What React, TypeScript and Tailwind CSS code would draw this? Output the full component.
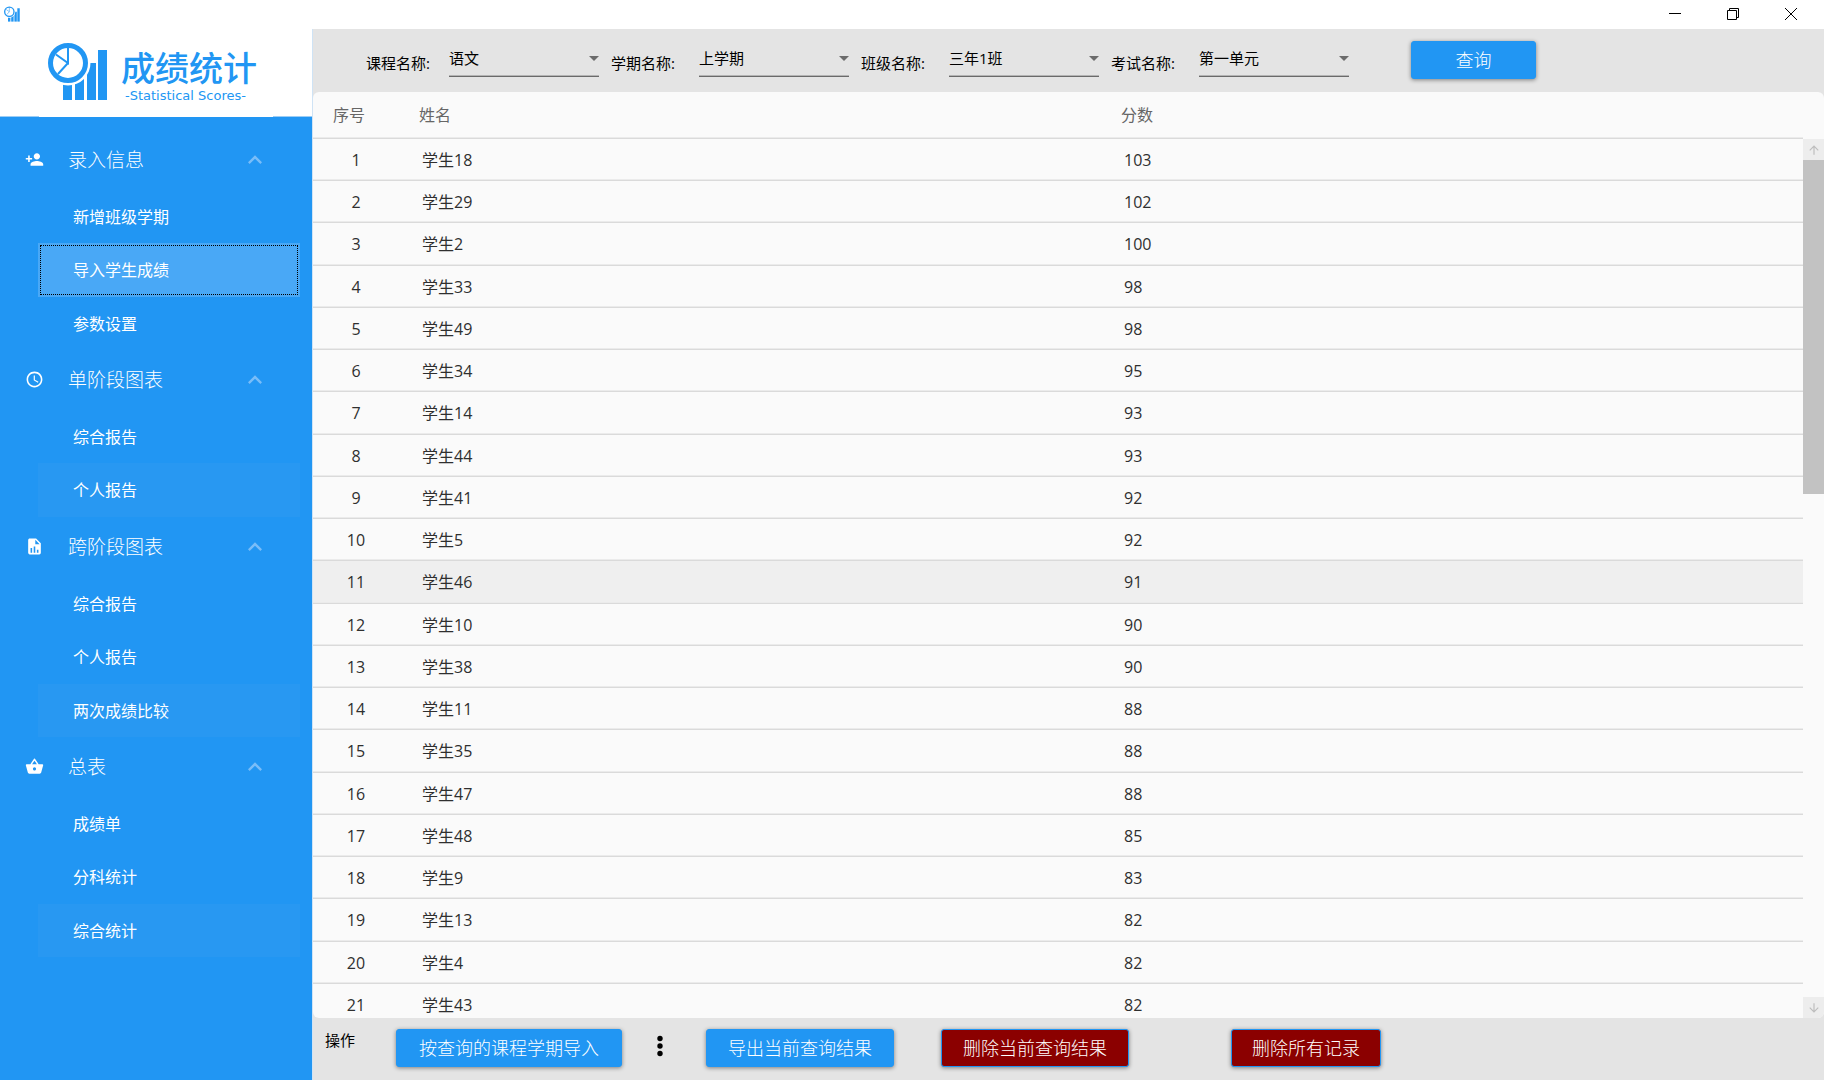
import type { ReactNode } from "react";
import {
  MdAccessTime,
  MdArrowDownward,
  MdArrowUpward,
  MdExpandLess,
  MdPersonAdd,
  MdShoppingBasket,
} from "react-icons/md";
import clsx from "clsx";

type Item = { name: string; state?: "active" | "hover" };
type Group = { title: string; icon: ReactNode; items: Item[] };

const FileChart = () => (
  <svg width={19} height={19} viewBox="0 0 24 24" fill="currentColor">
    <path d="M13 9H18.5L13 3.5V9M6 2H14L20 8V20A2 2 0 0 1 18 22H6C4.89 22 4 21.1 4 20V4C4 2.89 4.89 2 6 2M7 20H9V14H7V20M11 20H13V12H11V20M15 20H17V16H15V20Z" />
  </svg>
);

const GROUPS: Group[] = [
  {
    title: "录入信息",
    icon: <MdPersonAdd size={19} />,
    items: [
      { name: "新增班级学期" },
      { name: "导入学生成绩", state: "active" },
      { name: "参数设置" },
    ],
  },
  {
    title: "单阶段图表",
    icon: <MdAccessTime size={19} />,
    items: [{ name: "综合报告" }, { name: "个人报告", state: "hover" }],
  },
  {
    title: "跨阶段图表",
    icon: <FileChart />,
    items: [
      { name: "综合报告" },
      { name: "个人报告" },
      { name: "两次成绩比较", state: "hover" },
    ],
  },
  {
    title: "总表",
    icon: <MdShoppingBasket size={19} />,
    items: [
      { name: "成绩单" },
      { name: "分科统计" },
      { name: "综合统计", state: "hover" },
    ],
  },
];

const FILTERS = [
  { id: "course", label: "课程名称:", value: "语文" },
  { id: "term", label: "学期名称:", value: "上学期" },
  { id: "class", label: "班级名称:", value: "三年1班" },
  { id: "exam", label: "考试名称:", value: "第一单元" },
];

// [student number, score]
const SCORES = [
  [18, 103], [29, 102], [2, 100], [33, 98], [49, 98], [34, 95], [14, 93],
  [44, 93], [41, 92], [5, 92], [46, 91], [10, 90], [38, 90], [11, 88],
  [35, 88], [47, 88], [48, 85], [9, 83], [13, 82], [4, 82], [43, 82],
];

const LogoMark = ({ className }: { className: string }) => (
  <svg className={className} viewBox="48 43 60 57">
    <g fill="#2196f3">
      <rect x="63" y="84" width="9" height="16" />
      <rect x="75" y="78" width="9" height="22" />
      <rect x="87" y="63" width="9" height="37" />
      <rect x="98" y="50" width="9" height="50" />
    </g>
    <circle cx="68" cy="63" r="22.5" fill="#fff" />
    <circle cx="68" cy="63" r="17.5" fill="none" stroke="#2196f3" strokeWidth="5" />
    <path d="M68 47V63L56 54.500M68 63L58 74" fill="none" stroke="#2196f3" strokeWidth="2" />
  </svg>
);

const TitleBar = () => (
  <header className="flex h-[29px] shrink-0 items-start justify-between bg-white pr-1 pl-1">
    <LogoMark className="mt-[6px] h-4 w-4" />
    <div className="flex text-black">
      <button aria-label="最小化" className="flex h-7 w-[58px] items-center justify-center">
        <svg width="12" height="12" viewBox="0 0 12 12" stroke="currentColor">
          <path d="M0 5.500H12" />
        </svg>
      </button>
      <button aria-label="还原" className="flex h-7 w-[58px] items-center justify-center">
        <svg width="12" height="12" viewBox="0 0 12 12" fill="none" stroke="currentColor">
          <path d="M.5 2.500H9.500V11.500H.5ZM2.500 2.500V.5H11.500V9.500H9.500" />
        </svg>
      </button>
      <button aria-label="关闭" className="flex h-7 w-[58px] items-center justify-center">
        <svg width="12" height="12" viewBox="0 0 12 12" stroke="currentColor">
          <path d="M0 0L12 12M12 0L0 12" />
        </svg>
      </button>
    </div>
  </header>
);

const Sidebar = () => (
  <aside className="flex w-[312px] shrink-0 flex-col bg-[#2196f3]">
    {/* LOGO */}
    <div className="flex h-[87px] items-start bg-white pl-12">
      <LogoMark className="mt-[14px] h-[57px] w-[60px]" />
      <div className="pt-[19px] pl-[13px] text-[#2196f3]">
        <div className="text-[34px] leading-10 font-medium">成绩统计</div>
        <div className="pl-1 font-['DejaVu_Sans'] text-[13px] leading-4">-Statistical Scores-</div>
      </div>
    </div>
    <div className="flex h-px justify-between bg-white">
      <span className="w-[39px] bg-[#9ccdf5]" />
      <span className="w-[39px] bg-[#9ccdf5]" />
    </div>

    {/* MENU */}
    <nav className="pt-[13px] text-white">
      {GROUPS.map((group) => (
        <section key={group.title}>
          <button className="flex h-[60px] w-full items-center pr-[43px] pl-[25px]">
            <span className="pb-[2px]">{group.icon}</span>
            <span className="ml-6 text-[19px] leading-7 font-light">{group.title}</span>
            <MdExpandLess size={28} className="ml-auto text-[#79bdf8]" />
          </button>
          <ul className="mr-3 ml-[38px]">
            {group.items.map((item) => (
              <li key={item.name} className="h-[53px] even:h-[54px]">
                <a
                  href="#"
                  className={clsx(
                    "flex h-full items-center pl-[35px] text-base",
                    item.state === "active" &&
                      "bg-[#49a8f6] outline-1 -outline-offset-3 outline-black outline-dotted",
                    item.state === "hover" && "bg-[#2898f2]"
                  )}
                >
                  {item.name}
                </a>
              </li>
            ))}
          </ul>
        </section>
      ))}
    </nav>
  </aside>
);

const FilterBar = () => (
  <form className="flex h-[63px] shrink-0 items-start pt-3 pl-[53px] text-[15px] text-black">
    {FILTERS.map((filter) => (
      <div key={filter.id} className="group mr-3 flex items-start">
        <label
          htmlFor={filter.id}
          className="mt-3 w-[88px] leading-5 group-first:w-[83px]"
        >
          {filter.label}
        </label>
        <div className="relative">
          <select
            id={filter.id}
            className="h-9 w-[150px] appearance-none border-b border-[#6a6a6a] bg-transparent shadow-[inset_0_-1px_0_#b4b4b4] outline-none"
          >
            <option>{filter.value}</option>
          </select>
          <svg
            className="pointer-events-none absolute top-[15px] right-0"
            width="10"
            height="5"
            viewBox="0 0 10 5"
          >
            <path d="M0 0H10L5 5Z" fill="#6b6b6b" />
          </svg>
        </div>
      </div>
    ))}
    <Button className="ml-[50px] w-[125px]">查询</Button>
  </form>
);

const Button = ({
  children,
  className,
  danger,
}: {
  children: ReactNode;
  className: string;
  danger?: boolean;
}) => (
  <button
    type="button"
    className={clsx(
      "h-[38px] shrink-0 rounded-[3px] border border-[#2196f3] text-lg leading-7 font-light text-white shadow-[0_1px_4px_rgba(0,0,0,0.45)]",
      danger ? "bg-[#8b0000]" : "bg-[#2196f3]",
      className
    )}
  >
    {children}
  </button>
);

const CELL = "border-b border-[#dadada] shadow-[inset_0_-1px_0_#ebebeb]";

const ScoreTable = () => (
  <div className="flex min-h-0 flex-1 overflow-hidden rounded-md bg-[#fafafa]">
    <div className="min-w-0 flex-1 overflow-hidden">
      <table className="w-full table-fixed border-separate border-spacing-0 text-left text-base text-[#2f2f2f]">
        <thead>
          <tr className="h-[47px] text-[#666]">
            <th className={clsx(CELL, "w-[86px] pl-5 font-normal")}>序号</th>
            <th className={clsx(CELL, "pl-5 font-normal")}>姓名</th>
            <th className={clsx(CELL, "pl-5 font-normal")}>分数</th>
          </tr>
        </thead>
        <tbody>
          {SCORES.map(([student, score], index) => (
            <tr
              key={student}
              className={clsx("h-[42px] nth-[4n+3]:h-[43px]", index === 10 && "bg-[#efefef]")}
            >
              <td className={clsx(CELL, "text-center")}>{index + 1}</td>
              <td className={clsx(CELL, "pl-[23px]")}>学生{student}</td>
              <td className={clsx(CELL, "pl-[23px]")}>{score}</td>
            </tr>
          ))}
        </tbody>
      </table>
    </div>

    {/* SCROLLBAR */}
    <div className="mt-[47px] flex w-[21px] flex-col text-[#bdbdbd]">
      <button aria-label="向上滚动" className="flex h-[21px] items-center justify-center bg-[#ededed]">
        <MdArrowUpward size={14} />
      </button>
      <div className="h-[334px] bg-[#c2c2c2]" />
      <button
        aria-label="向下滚动"
        className="mt-auto flex h-[21px] items-center justify-center bg-[#ededed]"
      >
        <MdArrowDownward size={14} />
      </button>
    </div>
  </div>
);

const ActionBar = () => (
  <footer className="flex h-[62px] shrink-0 items-start pt-[11px] pl-3">
    <span className="w-[71px] text-[15px] leading-[22px] text-black">操作</span>
    <Button className="w-[226px]">按查询的课程学期导入</Button>
    <button aria-label="更多" className="flex h-[34px] w-[84px] items-center justify-center pr-2">
      <svg width="6" height="22" viewBox="0 0 6 22" fill="#000">
        <circle cx="3" cy="3.500" r="2.700" />
        <circle cx="3" cy="11" r="2.700" />
        <circle cx="3" cy="18.500" r="2.700" />
      </svg>
    </button>
    <Button className="w-[188px]">导出当前查询结果</Button>
    <Button danger className="ml-[47px] w-[188px]">删除当前查询结果</Button>
    <Button danger className="ml-[102px] w-[150px]">删除所有记录</Button>
  </footer>
);

const App = () => (
  <div className="flex h-screen flex-col overflow-hidden bg-white font-['Open_Sans','Noto_Sans_CJK_SC',sans-serif]">
    <TitleBar />
    <div className="flex min-h-0 flex-1">
      <Sidebar />
      <main className="flex min-w-0 flex-1 flex-col border-l border-[#cfe3f5] bg-[#e4e4e4]">
        <FilterBar />
        <ScoreTable />
        <ActionBar />
      </main>
    </div>
  </div>
);

export default App;
